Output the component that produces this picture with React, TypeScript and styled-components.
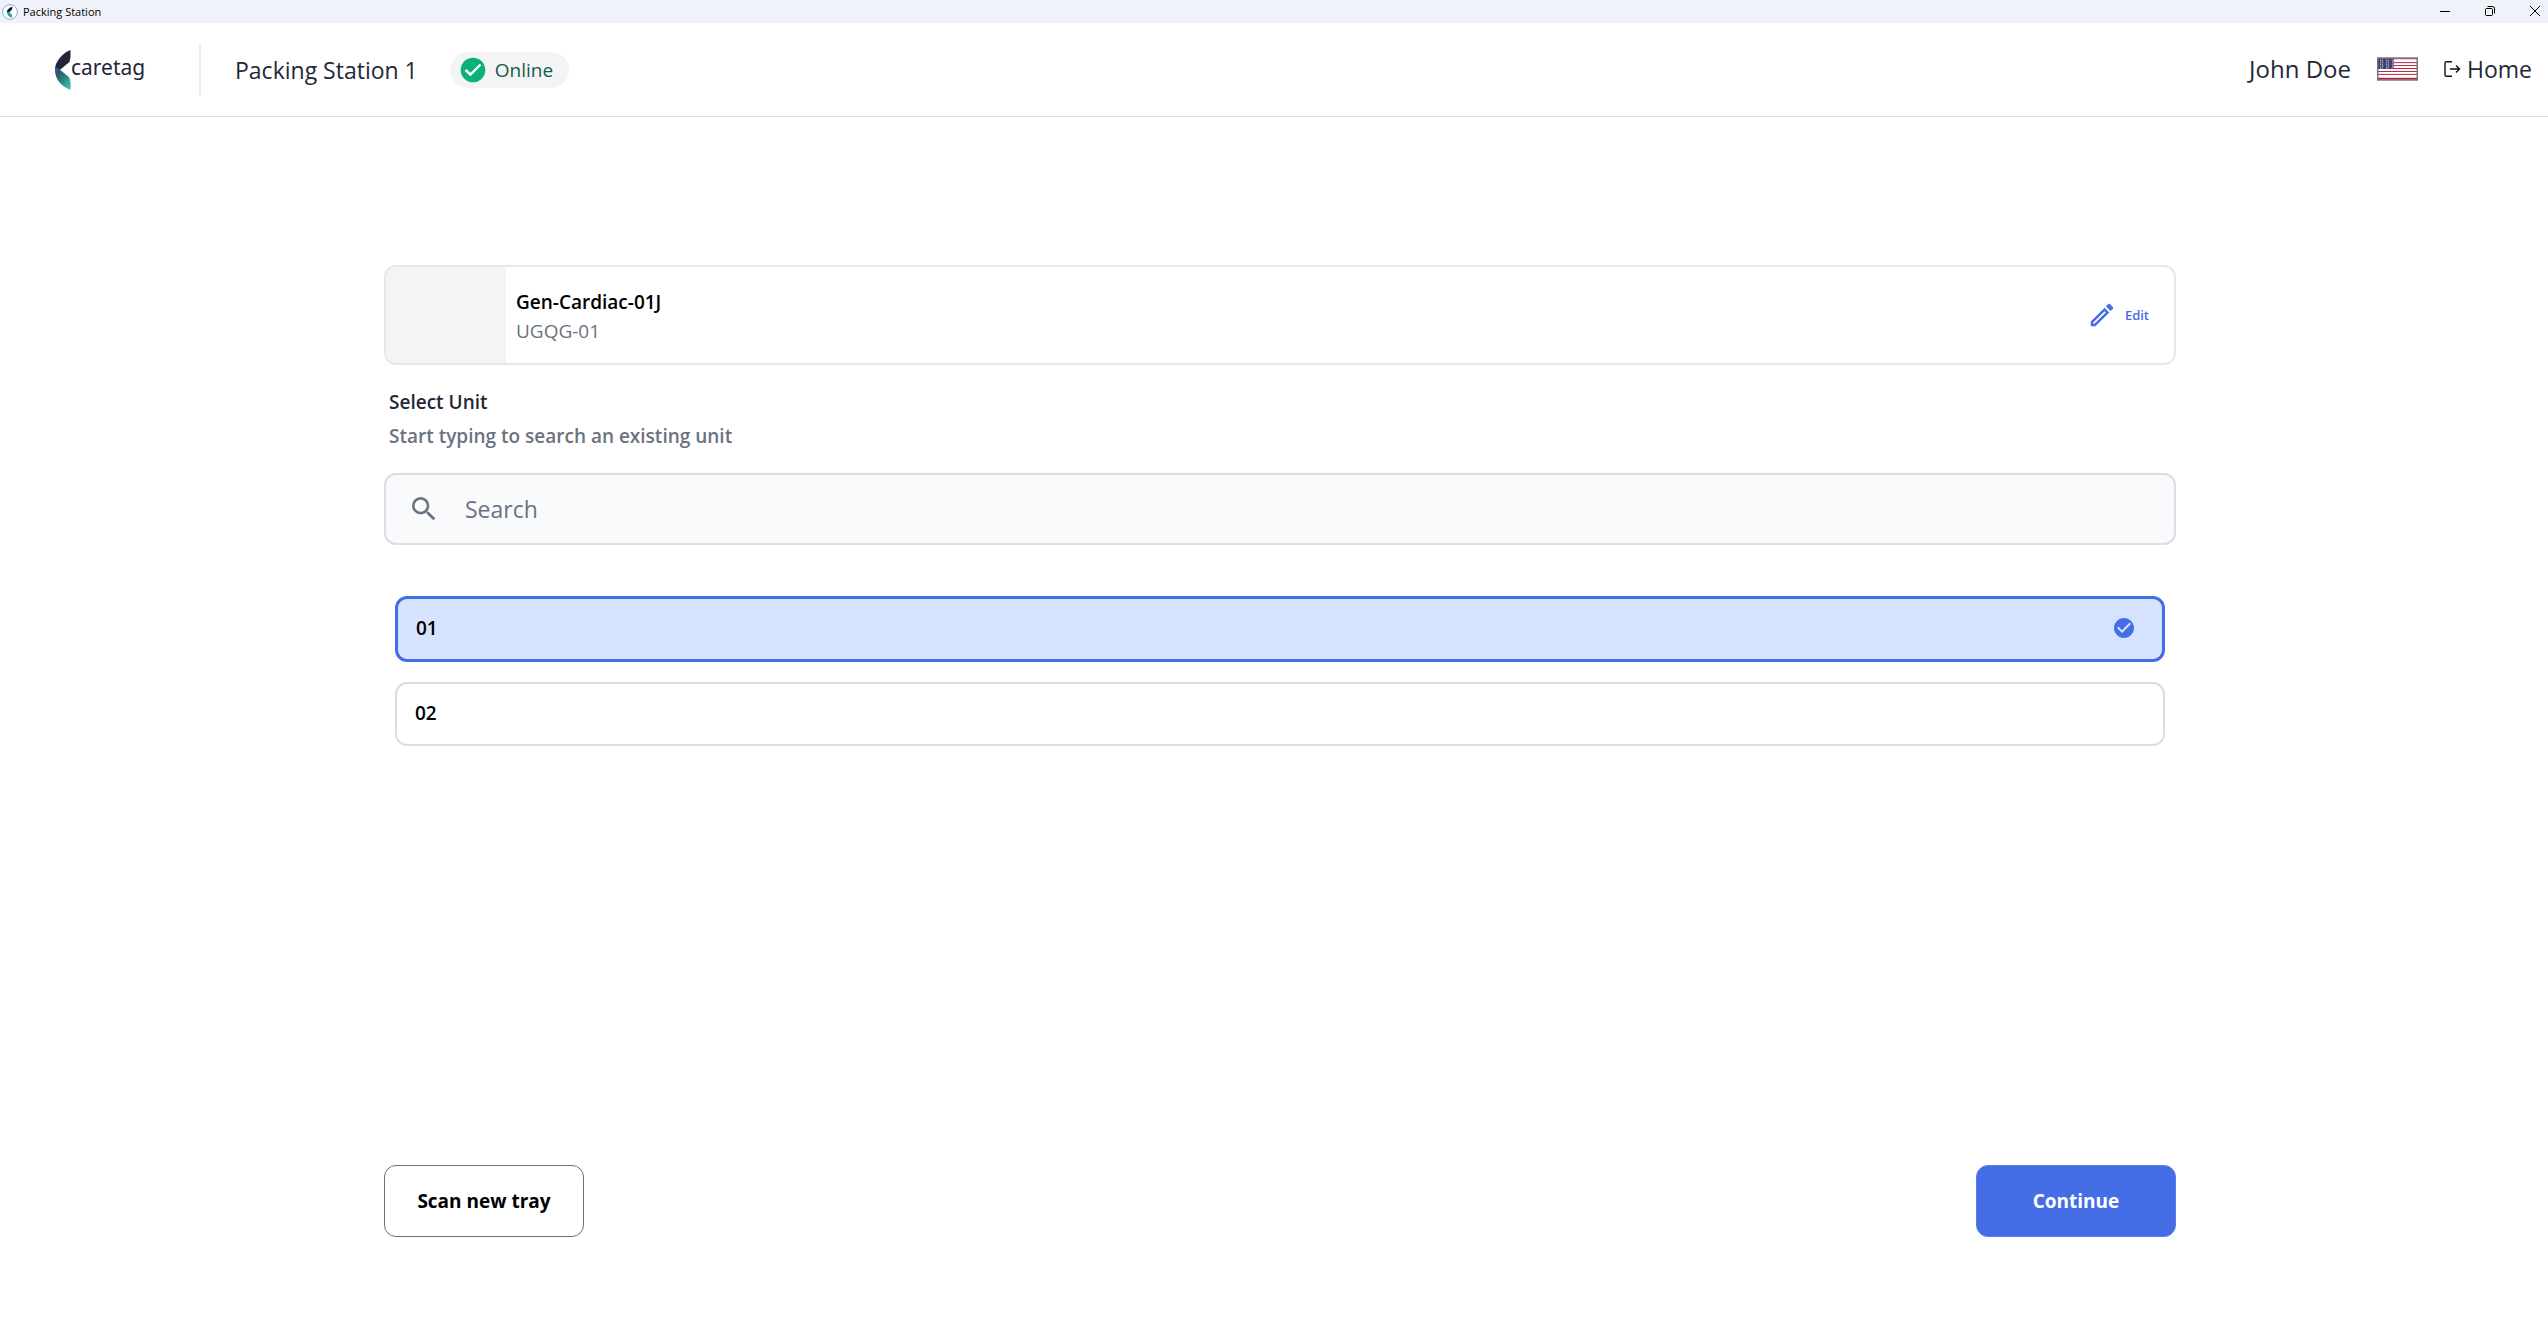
import React, { useState } from "react";
import styled, { createGlobalStyle } from "styled-components";
import { MdOutlineEdit, MdSearch, MdCheckCircle } from "react-icons/md";

const GlobalStyle = createGlobalStyle`
  *, *::before, *::after { box-sizing: border-box; }
  body {
    margin: 0;
    background: #fff;
    color: #1f2937;
    font-family: "Segoe UI", "Open Sans", "Noto Sans", sans-serif;
  }
  button, input { font: inherit; }
`;

const Page = styled.div`
  min-height: 100vh;
  display: flex;
  flex-direction: column;
`;

const TitleBar = styled.div`
  height: 23px;
  display: flex;
  align-items: center;
  justify-content: space-between;
  padding-left: 2px;
  background: #f0f2f9;
  color: #000;
  font-size: 11px;
  line-height: 16px;
`;

const WindowTitle = styled.div`
  display: flex;
  align-items: center;
  gap: 5px;
`;

const WindowControls = styled.div`
  display: flex;
`;

const WindowButton = styled.button`
  width: 45px;
  height: 22px;
  display: flex;
  align-items: center;
  justify-content: flex-end;
  padding: 0 8px 2px 0;
  border: 0;
  background: none;
  color: #000;
`;

const Header = styled.header`
  height: 94px;
  display: flex;
  align-items: center;
  justify-content: space-between;
  padding: 0 16px 0 54px;
  border-bottom: 1px solid #dddee2;
`;

const HeaderGroup = styled.div<{ $gap: number }>`
  display: flex;
  align-items: center;
  gap: ${(p) => p.$gap}px;
  font-size: 23px;
  line-height: 32px;
`;

const Brand = styled.a`
  width: 145px;
  display: flex;
  align-items: center;
  color: #24243a;
  text-decoration: none;
  font-family: "Noto Sans", sans-serif;
  font-size: 21px;
  line-height: 32px;
`;

const BrandName = styled.span`
  padding-bottom: 6px;
`;

const Station = styled.h1`
  height: 53px;
  display: flex;
  align-items: center;
  margin: 0;
  padding-left: 34px;
  border-left: 2px solid #ebecee;
  font-size: 23px;
  font-weight: 400;
`;

const Status = styled.div`
  height: 36px;
  display: flex;
  align-items: center;
  gap: 8px;
  padding: 0 16px 0 9px;
  border-radius: 18px;
  background: #f3f4f6;
  color: #17594a;
  font-size: 19px;
  line-height: 28px;
`;

const UserName = styled.span`
  font-size: 24px;
`;

const AccountGroup = styled(HeaderGroup)`
  padding-bottom: 2px;
`;

const FlagButton = styled.button`
  display: flex;
  padding: 0;
  border: 0;
  background: none;
`;

const HomeLink = styled.a`
  display: flex;
  align-items: center;
  gap: 6px;
  color: inherit;
  text-decoration: none;
`;

const Main = styled.main`
  flex: 1;
  display: flex;
  flex-direction: column;
  padding: 148px 0 96px 12px;
`;

const Content = styled.div`
  flex: 1;
  width: 100%;
  max-width: 1792px;
  display: flex;
  flex-direction: column;
  margin: 0 auto;
`;

const TrayCard = styled.section`
  height: 100px;
  display: flex;
  align-items: stretch;
  overflow: hidden;
  border: 2px solid #e5e7eb;
  border-radius: 12px;
`;

const Thumbnail = styled.div`
  width: 120px;
  background: #f3f4f6;
`;

const TrayText = styled.div`
  flex: 1;
  display: flex;
  flex-direction: column;
  justify-content: center;
  padding: 4px 0 0 10px;
  font-size: 19px;
  line-height: 29px;
`;

const TrayName = styled.h2`
  margin: 0;
  color: #000;
  font-size: 19px;
  font-weight: 600;
`;

const TrayCode = styled.span`
  color: #6b7280;
`;

const EditButton = styled.button`
  display: flex;
  align-items: center;
  gap: 8px;
  padding: 0 25px;
  border: 0;
  background: none;
  color: #456de6;
  font-size: 13px;
  font-weight: 600;
`;

const Intro = styled.div`
  padding: 20px 5px;
  font-size: 19px;
  line-height: 34px;
  font-weight: 600;
`;

const IntroTitle = styled.h2`
  margin: 0;
  font-size: 19px;
  font-weight: 600;
`;

const IntroHint = styled.label`
  display: block;
  color: #6b7280;
`;

const SearchBox = styled.div`
  height: 72px;
  display: flex;
  align-items: center;
  gap: 25px;
  padding: 0 22px;
  border: 2px solid #dcdde2;
  border-radius: 12px;
  background: #f9fafc;
  color: #6b7280;
`;

const SearchInput = styled.input`
  flex: 1;
  padding: 0;
  border: 0;
  outline: 0;
  background: none;
  color: #1f2937;
  font-size: 23px;
  line-height: 32px;
  &::placeholder { color: #6b7280; opacity: 1; }
`;

const UnitList = styled.div`
  display: flex;
  flex-direction: column;
  gap: 20px;
  padding: 51px 11px;
`;

const UnitRow = styled.label<{ $selected: boolean }>`
  position: relative;
  display: flex;
  align-items: center;
  justify-content: space-between;
  padding: 15px 26px 17px 18px;
  border: ${(p) => (p.$selected ? "3px solid #456de6" : "2px solid #dcdde2")};
  border-radius: 12px;
  background: ${(p) => (p.$selected ? "#d6e3ff" : "#fff")};
  color: #000;
  font-size: 19px;
  line-height: 28px;
  font-weight: 600;
  cursor: pointer;
`;

const UnitRadio = styled.input`
  position: absolute;
  width: 1px;
  height: 1px;
  margin: 0;
  opacity: 0;
`;

const Actions = styled.footer`
  display: flex;
  justify-content: space-between;
  margin-top: auto;
`;

const ActionButton = styled.button<{ $primary?: boolean }>`
  width: 200px;
  height: 72px;
  padding-bottom: 2px;
  border: 1px solid ${(p) => (p.$primary ? "#5a7dea" : "#6f6f6f")};
  border-radius: 12px;
  background: ${(p) => (p.$primary ? "#456de6" : "#fff")};
  color: ${(p) => (p.$primary ? "#fff" : "#000")};
  font-size: 19px;
  font-weight: 700;
`;

const AppIcon = () => (
  <svg width="16" height="16" viewBox="0 0 16 16" aria-hidden="true">
    <circle cx="8" cy="8" r="7.4" fill="#fff" stroke="#8fa9e0" />
    <path d="M10.500 2.500C6.500 4 4.500 6 5 8.500L7 8.500L10 5.500Z" fill="#11142b" />
    <path d="M5 8C5 11 7 13 10 13.800V11L7 8Z" fill="#16a89a" />
  </svg>
);

const LogoMark = () => (
  <svg width="17" height="42" viewBox="0 0 17 42" aria-hidden="true">
    <defs>
      <linearGradient id="leaf" x1="0" y1="0" x2="1" y2="1">
        <stop offset="0" stopColor="#27404f" />
        <stop offset="0.5" stopColor="#2c827f" />
        <stop offset="1" stopColor="#43ccb9" />
      </linearGradient>
    </defs>
    <path d="M16.500 1C9 4 1 12 1 20.500L4.500 22L15.500 13Q17 8 16.500 1Z" fill="#24243a" />
    <path d="M1 19.500C.500 31 8 37.500 16.500 41C17 35 16.500 31 15 28L5 20Z" fill="url(#leaf)" />
    <path d="M1 18L5.500 20.500L2.500 25Q1 22 1 18Z" fill="#3350ad" />
  </svg>
);

const StatusIcon = () => (
  <svg width="28" height="28" viewBox="0 0 28 28" aria-hidden="true">
    <circle cx="14" cy="14" r="12.300" fill="#0cb07b" />
    <path d="M6.500 14L11.500 18.500L21.500 8.500" fill="none" stroke="#fff" strokeWidth="2.400" />
  </svg>
);

const UsFlag = () => (
  <svg width="41" height="24" viewBox="0 0 42 24" aria-hidden="true">
    <rect width="42" height="24" fill="#fff" />
    {[1, 5, 8, 11, 14, 17, 21].map((y) => (
      <rect key={y} x="1" y={y} width="40" height={y === 21 ? 2 : 1} fill="#b7203c" />
    ))}
    <rect x="1" y="1" width="16" height="11" fill="#3c3b6e" />
    {[3, 5, 7, 9, 11].map((y, row) =>
      [3, 5, 9, 11, 15].map((x) => (
        <rect key={`${x}-${y}`} x={row % 2 ? x + 0.5 : x} y={y - 0.5} width="1" height="1" fill="#fff" />
      )),
    )}
    <rect x="0.75" y="0.75" width="40.500" height="22.500" fill="none" stroke="#77737b" strokeWidth="1.500" />
  </svg>
);

const ExitIcon = () => (
  <svg width="17" height="16" viewBox="0 0 17 16" fill="none" stroke="#111" strokeWidth="1.400" aria-hidden="true">
    <path d="M8 .8H2.500Q1 .8 1 2.300V13.700Q1 15.200 2.500 15.200H8" />
    <path d="M6 8H15.500M12 4.500L15.500 8L12 11.500" />
  </svg>
);

const UNITS = ["01", "02"];

export default function App() {
  const [unit, setUnit] = useState("01");
  return (
    <Page>
      <GlobalStyle />
      <TitleBar>
        <WindowTitle>
          <AppIcon />
          <span>Packing Station</span>
        </WindowTitle>
        <WindowControls>
          <WindowButton aria-label="Minimize">
            <svg width="10" height="10" viewBox="0 0 10 10" stroke="currentColor"><path d="M0 5.500H10" /></svg>
          </WindowButton>
          <WindowButton aria-label="Restore">
            <svg width="10" height="10" viewBox="0 0 10 10" fill="none" stroke="currentColor">
              <rect x="0.500" y="2.500" width="7" height="7" rx="1" />
              <path d="M2.500 .5H7.500Q9.500 .5 9.500 2.500V7.500" />
            </svg>
          </WindowButton>
          <WindowButton aria-label="Close">
            <svg width="10" height="10" viewBox="0 0 10 10" stroke="currentColor"><path d="M0 0L10 10M10 0L0 10" /></svg>
          </WindowButton>
        </WindowControls>
      </TitleBar>
      <Header>
        <HeaderGroup $gap={0}>
          <Brand href="#">
            <LogoMark />
            <BrandName>caretag</BrandName>
          </Brand>
          <HeaderGroup $gap={32}>
            <Station>Packing Station 1</Station>
            <Status>
              <StatusIcon />
              Online
            </Status>
          </HeaderGroup>
        </HeaderGroup>
        <AccountGroup $gap={26}>
          <UserName>John Doe</UserName>
          <FlagButton aria-label="Change language">
            <UsFlag />
          </FlagButton>
          <HomeLink href="#">
            <ExitIcon />
            Home
          </HomeLink>
        </AccountGroup>
      </Header>
      <Main>
        <Content>
          <TrayCard>
            <Thumbnail />
            <TrayText>
              <TrayName>Gen-Cardiac-01J</TrayName>
              <TrayCode>UGQG-01</TrayCode>
            </TrayText>
            <EditButton>
              <MdOutlineEdit size={30} />
              Edit
            </EditButton>
          </TrayCard>
          <Intro>
            <IntroTitle>Select Unit</IntroTitle>
            <IntroHint htmlFor="unit-search">Start typing to search an existing unit</IntroHint>
          </Intro>
          <SearchBox>
            <MdSearch size={32} />
            <SearchInput id="unit-search" type="text" placeholder="Search" />
          </SearchBox>
          <UnitList role="radiogroup" aria-label="Select Unit">
            {UNITS.map((u) => (
              <UnitRow key={u} $selected={u === unit}>
                <UnitRadio type="radio" name="unit" value={u} checked={u === unit} onChange={() => setUnit(u)} />
                {u}
                {u === unit && <MdCheckCircle size={24} color="#456de6" />}
              </UnitRow>
            ))}
          </UnitList>
          <Actions>
            <ActionButton>Scan new tray</ActionButton>
            <ActionButton $primary>Continue</ActionButton>
          </Actions>
        </Content>
      </Main>
    </Page>
  );
}
